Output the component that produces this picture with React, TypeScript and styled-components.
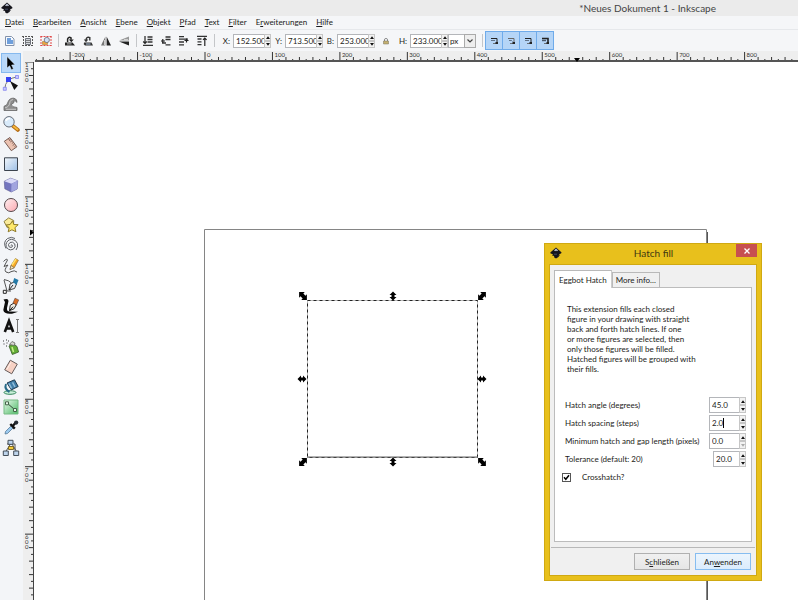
import React, { ReactNode, useEffect, useState } from "react";
import styled, { createGlobalStyle, css } from "styled-components";

const GlobalStyle = createGlobalStyle`
  *, *::before, *::after { box-sizing: border-box; }
  html, body, #root { height: 100%; margin: 0; }
  body { overflow: hidden; background: #fff; }
  body, button, input, select { font-family: Lato, "Open Sans", sans-serif; font-size: 8px; color: #1c1c20; }
  button { padding: 0; border: 0; background: none; }
  svg { display: block; }
`;

const Shell = styled.div`
  position: relative;
  display: flex;
  flex-direction: column;
  height: 100vh;
  overflow: hidden;
`;

const TitleBar = styled.header`
  display: flex;
  align-items: center;
  height: 16px;
  flex: none;
  padding: 0 82px 0 1px;
  background: #ebebeb;
`;

const WindowTitle = styled.h1`
  margin: 0 0 0 auto;
  font-size: 10px;
  line-height: 16px;
  font-weight: 400;
  color: #444;
`;

const MenuBar = styled.nav`
  display: flex;
  gap: 9px;
  height: 14px;
  flex: none;
  padding: 0 5px;
  background: #f5f6f8;
  border-bottom: 1px solid #e6e8eb;
`;

const MenuItem = styled.button`
  line-height: 13px;
  white-space: nowrap;
`;

const ToolBar = styled.div`
  display: flex;
  align-items: center;
  height: 21px;
  flex: none;
  padding-left: 1px;
  background: #f5f6f8;
`;

const IconButton = styled.button`
  display: grid;
  place-items: center;
  width: 18px;
  height: 19px;
  flex: none;
`;

const ToggleButton = styled(IconButton)`
  background: #b5d5f7;
  border: 1px solid #6fabea;
  & + & { margin-left: -1px; }
`;

const Separator = styled.span`
  width: 6px;
  height: 13px;
  flex: none;
  &::before {
    content: "";
    display: block;
    width: 1px;
    height: 100%;
    margin: 0 auto;
    background: #c4c6c9;
  }
`;

const Fields = styled.div`
  display: flex;
  align-items: center;
  padding: 0 3px 0 2px;
`;

const FieldLabel = styled.label`
  width: 14px;
  padding-right: 3px;
  text-align: right;
`;

const SpinBox = styled.span<{ $width: number; $height: number }>`
  position: relative;
  display: flex;
  width: ${(p) => p.$width}px;
  height: ${(p) => p.$height}px;
  flex: none;
`;

const SpinInput = styled.input`
  flex: 1;
  min-width: 0;
  padding: 0 0 0 2px;
  border: 1px solid #b4b6ba;
  border-right: 0;
  border-radius: 0;
  background: #fff;
  outline: none;
`;

const Steppers = styled.span`
  display: flex;
  flex-direction: column;
  width: 7px;
`;

const Stepper = styled.button`
  display: grid;
  place-items: center;
  flex: 1;
  min-height: 0;
  border: 1px solid #c6c6c6;
  background: #f2f2f2;
  color: #111;
  &:disabled { color: #aaa; }
`;

const Caret = styled.span`
  position: absolute;
  left: 14px;
  top: 3px;
  width: 1px;
  height: 10px;
  background: #000;
`;

const LockButton = styled(IconButton)`
  width: 21px;
`;

const UnitBox = styled.span`
  position: relative;
  width: 28px;
  height: 14px;
`;

const UnitSelect = styled.select`
  width: 100%;
  height: 100%;
  padding: 0 0 0 1px;
  appearance: none;
  border: 1px solid #b4b6ba;
  border-radius: 0;
  background: #fff;
`;

const UnitArrow = styled.span`
  position: absolute;
  right: 0;
  top: 0;
  display: grid;
  place-items: center;
  width: 12px;
  height: 14px;
  border: 1px solid #aaa;
  background: #eee;
  pointer-events: none;
`;

const Workspace = styled.main`
  display: grid;
  grid-template-columns: 23px 11px 1fr;
  grid-template-rows: 11px 1fr;
  flex: 1;
  min-height: 0;
`;

const ToolColumn = styled.div`
  grid-row: 1 / 3;
  min-height: 0;
  background: #f3f5f8;
`;

const ToolBox = styled.aside`
  display: flex;
  flex-direction: column;
  justify-content: space-between;
  align-items: flex-start;
  height: 100%;
  max-height: 407px;
  padding: 2px 0 0 1px;
`;

const ToolButton = styled.button<{ $active?: boolean }>`
  display: grid;
  place-items: center;
  width: 20px;
  height: 20px;
  flex: none;
  border: 1px solid transparent;
  ${(p) => p.$active && css`
    background: #b9d8f9;
    border-color: #86b9ee;
  `}
`;

const RulerTop = styled.div`
  grid-column: 2 / 4;
  min-width: 0;
  overflow: hidden;
  background: #eeeeee;
`;

const RulerLeft = styled.div`
  min-height: 0;
  overflow: hidden;
  background: #eeeeee;
`;

const Canvas = styled.section`
  min-width: 0;
  min-height: 0;
  overflow: hidden;
  background: #fff;
`;

const Drawing = styled.svg`
  width: 100%;
  height: 100%;
`;

const TickText = styled.text`
  font-family: Lato, sans-serif;
  font-size: 6px;
  fill: #333;
`;

const Dialog = styled.section`
  position: absolute;
  left: 544px;
  top: 243px;
  display: flex;
  flex-direction: column;
  width: 218px;
  height: 338px;
  padding: 0 4px 4px;
  background: #e8c01c;
  border: 1px solid #d0a912;
`;

const DialogTitleBar = styled.header`
  display: grid;
  grid-template-columns: 21px 1fr 21px;
  height: 20px;
  flex: none;
  padding-left: 1px;
`;

const DialogIcon = styled.span`
  padding: 3px 0 0;
`;

const DialogTitle = styled.h2`
  margin: 0;
  text-align: center;
  font-size: 10px;
  line-height: 19px;
  font-weight: 400;
  color: #3f3812;
`;

const CloseButton = styled.button`
  display: grid;
  place-items: center;
  height: 13px;
  background: #c75050;
`;

const DialogBody = styled.div`
  display: flex;
  flex-direction: column;
  flex: 1;
  border: 1px solid #d0a912;
  background: #f0f0f0;
`;

const Tabs = styled.div`
  display: flex;
  align-items: flex-end;
  padding: 5px 4px 0;
`;

const Tab = styled.button<{ $active?: boolean }>`
  height: 15px;
  padding: 0 3px;
  border: 1px solid #b9b9b9;
  border-bottom: 0;
  background: #f0f0f0;
  white-space: nowrap;
  ${(p) => p.$active && css`
    position: relative;
    height: 18px;
    margin-bottom: -1px;
    padding: 0 4px;
    border-right-color: #ccc;
    background: #fff;
  `}
`;

const Panel = styled.div`
  flex: 1;
  margin: 0 4px 5px;
  padding: 16px 5px 0 7px;
  border: 1px solid #bcbcbc;
  background: #fff;
`;

const Description = styled.p`
  margin: 0 0 22px 5px;
  line-height: 10px;
`;

const FormRow = styled.div`
  display: flex;
  align-items: center;
  justify-content: space-between;
  height: 18px;
  padding-left: 3px;
  white-space: nowrap;
`;

const CheckRow = styled.label`
  display: flex;
  align-items: center;
  gap: 11px;
  height: 18px;
`;

const CheckBox = styled.input`
  appearance: none;
  width: 9px;
  height: 9px;
  margin: 0;
  border: 1px solid #555;
  background: #fff;
  &:checked {
    background: #fff url("data:image/svg+xml,%3Csvg xmlns='http://www.w3.org/2000/svg' viewBox='0 0 7 7'%3E%3Cpath d='M1 3.3 2.8 5.3 6 1.3' fill='none' stroke='black' stroke-width='1.5'/%3E%3C/svg%3E") center / 7px no-repeat;
  }
`;

const DialogActions = styled.footer`
  display: flex;
  justify-content: flex-end;
  gap: 5px;
  margin: 0 1px;
  padding: 5px 4px 5px;
  border-top: 1px solid #b8b8b8;
`;

const ActionButton = styled.button<{ $primary?: boolean }>`
  width: 56px;
  height: 17px;
  border: 1px solid ${(p) => (p.$primary ? "#86bdf0" : "#b0b0b0")};
  background: ${(p) => (p.$primary ? "linear-gradient(#ecf5fd, #dbecfc)" : "linear-gradient(#f0f0f0, #e6e6e6)")};
`;

const Logo = ({ size }: { size: number }) => (
  <svg width={size} height={size} viewBox="0 0 12 12" aria-hidden="true">
    <path d="M6 .6 11.4 5.2Q11.9 6.7 9.6 7L9 7.6 10.2 8.3 8.6 8.8 8.9 9.7 6 11.6 4 10.2 4.2 9 2 8.5 3 7.2.6 6.6.3 5.4Z" fill="#15151c" />
    <path d="M6 1.6 8 3.5 7 4.2 6.1 3.6 5.1 4.3 4.1 3.5Z" fill="#c3cadb" />
    <path d="M4 7.2h3" stroke="#5c6c92" strokeWidth=".6" />
  </svg>
);

const Svg = ({ children, size = 12 }: { children: ReactNode; size?: number }) => (
  <svg width={size} height={size} viewBox={`0 0 ${size} ${size}`} fill="none" aria-hidden="true">
    {children}
  </svg>
);

const barsWith = (arrow: string, bars: string) => (
  <Svg>
    <path d={bars} stroke="#333" strokeWidth="1.3" />
    <path d={arrow} stroke="#222" strokeWidth="1.2" />
  </Svg>
);

const selectIcons: [string, ReactNode][] = [
  ["Alles auswählen", <Svg><path d="M1.500 1.500h6l2.500 2.500v6.500h-8.500Z" fill="#f6faff" stroke="#8391a9" /><path d="M3 3h4v2h2v4H3Z" fill="#6f9fdc" /></Svg>],
  ["In allen Ebenen auswählen", <Svg><path d="M0 1.500h11M1.500 1v10M0 10.500h11M10.500 1v10" stroke="#555" strokeDasharray="2 1" /><path d="M3.500 3.500h5v6h-5Z" fill="#d5d9de" stroke="#6f737c" /><path d="M4 5.500h4M4 7.500h4" stroke="#555" strokeWidth=".7" /></Svg>],
  ["Auswahl aufheben", <Svg><path d="M.500 1.500h11M1 1v10M.500 10.500h11M11 1v10" stroke="#e04848" strokeDasharray="2 1" /><path d="M2.500 6.500h5v3h-5Z" fill="#eda63c" stroke="#a97a35" strokeWidth=".6" /><circle cx="6.800" cy="5" r="2.600" fill="#cfe1f5" stroke="#667" strokeWidth=".8" /></Svg>],
];

const turnIcons: [string, ReactNode][] = [
  ["Gegen Uhrzeigersinn drehen", <Svg><path d="M1 7.500h7.500l2.500 3H1Z" fill="#222" /><path d="M3 8.900h4.500" stroke="#ddd" strokeWidth=".8" /><path d="M3.600 7V4q1-2.500 3.400-1.200v2" stroke="#222" strokeWidth="1.500" /><path d="M4.800 4.400h5L7.300 7.200Z" fill="#222" /></Svg>],
  ["Im Uhrzeigersinn drehen", <Svg><path d="M2 7.500h7.500l1.500 3H3Q1 9.500 2 7.500Z" fill="#333" /><path d="M4 9h4.500" stroke="#aec3dd" /><path d="M4.200 5V4q.8-2.500 3.600-1.400v3" stroke="#333" strokeWidth="1.400" /><path d="M1.800 4.600h4.600L4 7.200Z" fill="#333" /></Svg>],
  ["Horizontal umkehren", <Svg><path d="M5.400 1.500v9H1Z" fill="#777" /><path d="M6.600 1.500v9H11Z" fill="#222" /><path d="M4.500 5v5" stroke="#ccc" /></Svg>],
  ["Vertikal umkehren", <Svg><path d="M11 1.500v4H1Z" fill="#999" /><path d="M11 10.500v-4H1Z" fill="#222" /><path d="M6 4.700h4" stroke="#ddd" /></Svg>],
];

const orderIcons: [string, ReactNode][] = [
  ["Nach ganz unten", barsWith("M3 1v7M1.200 6.500 3 8.300l1.800-1.800", "M5.500 2h5M5.500 4.500h5M5.500 7h5M1 10.300h10")],
  ["Absenken", barsWith("M1 6h4M2.800 4v4", "M5.500 2h5M5.500 4.500h5M2 8h4M5.500 9.800h5")],
  ["Anheben", barsWith("M8.500 3.500v4M6.500 5.500h4", "M1 1.700h5M1 4.200h9M1 7h5M1 9.800h5")],
  ["Nach ganz oben", barsWith("M8.800 3v8M7 4.800 8.800 3l1.800 1.800", "M1 1.300h10M1.500 4h4M1.500 6.800h4M1.500 9.600h4")],
];

const Affect = ({ kind }: { kind: number }) => (
  <Svg size={8}>
    <path d="M1 1.500h6v3.500" stroke={kind === 1 ? "#666" : "#222"} strokeWidth={kind === 3 ? 1.6 : 1} />
    <path d={kind === 1 ? "M2 3.500h2.500l1 1" : "M1 3.500h4"} stroke="#4d5a6c" strokeWidth={kind === 3 ? 1.4 : 0.8} />
    <path d="M3 6.500h3" stroke="#555" strokeWidth=".8" />
    <path d="M5.500 5H8v2H5.500Z" fill="#222" />
  </Svg>
);

const T = ({ children }: { children: ReactNode }) => (
  <svg width="18" height="18" viewBox="0 0 18 18" fill="none" strokeLinejoin="round" aria-hidden="true">{children}</svg>
);

const tools: [string, ReactNode][] = [
  ["Auswahl", <T><path d="M5 2.500v11.500l2.600-2.200 1.800 3.900 2-1-1.800-3.700 3.400-.3Z" fill="#000" stroke="#dcecff" strokeWidth=".5" /></T>],
  ["Knoten", <T><path d="M2.800 15Q3 4.500 15.500 2.800" stroke="#777" /><path d="M1.300 13.300h3v3h-3ZM13.500 1.500h3v3h-3Z" fill="#c8c8ff" stroke="#7777ef" strokeWidth=".7" /><path d="M4 3h5v5H4Z" fill="#3542f2" /><path d="m8 7 8 4.500-3.700 4.500Z" fill="#111" /></T>],
  ["Modellieren", <T><path d="M2 15.500v-4.200Q5.500 10.500 6 7 7.500 2.700 12 3.200q3.400 1 3 4.200-1.600-2-3.400-1.400 1 1.800-.6 2.400-1.700.3-1.600 1.500.8 2.400 5.600 2.600v3Z" fill="#8d8d8d" stroke="#666" strokeWidth=".8" /><path d="M3 12.800q4.500-.6 5-6.100.8-2 3-2.200M4 14.300h10" stroke="#ccc" strokeWidth=".9" /></T>],
  ["Zoom", <T><path d="m11 11 5 4" stroke="#b36a13" strokeWidth="3.600" strokeLinecap="round" /><path d="m11.500 11.300 4 3.200" stroke="#f4b83d" strokeWidth="2" strokeLinecap="round" /><circle cx="7" cy="6.800" r="5.200" fill="#d9ebfb" stroke="#656b76" /><path d="M4 6q1-3 4-2.500" stroke="#fff" strokeWidth="1.800" /></T>],
  ["Messen", <T><path d="m2.300 6.300 5.600-3.800 7 9.300-5.600 3.900Z" fill="#ecc3b2" stroke="#775d55" /><path d="m6.500 3.800 1.700 2.300M8.800 4 7.500 5M10 5.800 8.300 7M11.200 7.500l-1.300 1M12.500 9.200l-1.800 1.300M13.700 10.800l-1.300 1" stroke="#6c514a" strokeWidth=".8" /></T>],
  ["Rechteck", <T><path d="M2.500 2.800h13v12.700h-13Z" fill="url(#blueFill)" stroke="#3b434e" /></T>],
  ["Quader", <T><path d="m2.300 5.200 6.400-3 7 2.600-.5 8.200-6 3-6.400-3.200Z" fill="#7375bf" stroke="#55568e" strokeWidth=".6" /><path d="m2.300 5.200 6.400-3 7 2.600-6.200 3Z" fill="#dadbf8" /><path d="m9.500 7.800 6.200-3-.5 8.200-6 3Z" fill="#a1a4df" /></T>],
  ["Ellipse", <T><circle cx="9" cy="9" r="6.500" fill="url(#pinkFill)" stroke="#55484b" /></T>],
  ["Stern", <T><path d="m2 5.500 4.700-3.600 5 2.600-.2 5.600-6.200 1.600Z" fill="#faeb9a" stroke="#8e8141" /><path d="m10.500 4.800 1.300 3.700 4.400.2-3.300 3 1 4-4-1.900-3.700 2 .9-4.100-3-2.700 4-.5Z" fill="#ffe96a" stroke="#8e7a28" /></T>],
  ["Spirale", <T><path d="M9 9.500q.2-1.200 1.200-.4.9 2-1.200 2.400-2.800-.1-2.500-3 1-2.900 4-2.300 3.200 1.200 2.600 4.500-1.100 3.300-4.600 3.200Q4 13 4 8.700 4.800 3.800 9.600 3.300q4.400.2 5.900 4.200.6 4-1.500 6.500M4 12.500Q.6 6 5.500 2.500 9.500.2 13 2.500" stroke="#5e6166" /></T>],
  ["Freihand", <T><path d="M1.500 4.500q3.500-3.600 4-1.500L2 9.500 6 8Q1.500 13 4 15q3 1.800 5-.3 3.500-2 6 .4" stroke="#555" /><path d="m8 12.500 1-4 4.400-7 3 1.800-4.200 7.500Z" fill="#f7a826" stroke="#7e6027" strokeWidth=".6" /><path d="m8 12.500 1-4 3.200 2.200Z" fill="#f7e4b5" stroke="#333" strokeWidth=".4" /><path d="m10 8 4-6" stroke="#ffe36d" strokeWidth="1.400" /></T>],
  ["Bézierkurve", <T><path d="M2 2.500q5 .8 7.500 3.500M2 3l3 11h4" stroke="#555" /><path d="M1.300 13.300h3v3h-3Z" fill="#fff" stroke="#222" /><path d="m7 13 1-6 4-2 2.500 2-2 4.500Z" fill="#e9edf2" stroke="#444" /><path d="m11 5 1.200-4 4.300 2-2 5Z" fill="#247aa8" /><path d="m7 13 4-5" stroke="#222" /></T>],
  ["Kalligrafie", <T><path d="M1.500 2.500q5-1.500 5 1.500L5 11q-.5 3.500 3 3.500l8 .3-6 1.900Q2 17.500 1.300 13L3 5Z" fill="#0b0b0b" /><path d="m7.500 13.700.7-5.300L12 6l2.300 1.700-2.200 4Z" fill="#f2eee5" stroke="#222" /><path d="m11 6 2-4.800 3.700 1.700-2.200 5Z" fill="#d96d24" stroke="#433" strokeWidth=".5" /><path d="m7.500 13.700 3.500-4" stroke="#111" /></T>],
  ["Text", <T><path d="M2.800 15 7 4l4.200 11M4.200 11.500h5.600" stroke="#111" strokeWidth="2.600" strokeLinejoin="miter" /><path d="M14 2.500h3m-1.500 0v13m-1.500 0h3" stroke="#777" /></T>],
  ["Sprühen", <T><path d="m7 8 4-2.500 4 3 1.600 5.500-6.300 2.500Z" fill="#62ad35" stroke="#395a2b" strokeWidth=".8" /><path d="m7.500 6.500 2.500-3 3 1.500-.6 2.500Z" fill="#d8d9d2" stroke="#555" strokeWidth=".7" /><path d="M1 3h1m2-1h1M1.500 6h1m2-1h1M4 8h1m1-5h1" stroke="#333" strokeWidth="1.200" /><path d="m10 9 1.500 5" stroke="#c8ee8a" strokeWidth="1.500" /></T>],
  ["Radieren", <T><path d="m8.300 2.200 7 4-5.600 9.600-7-4Z" fill="#f6d1c4" stroke="#665b5a" /><path d="m4.800 11.500 4.200-7.200" stroke="#fff0e9" /></T>],
  ["Füllen", <T><ellipse cx="8" cy="14.500" rx="6" ry="1.800" fill="#c9f0da" stroke="#35865d" /><path d="M4 6q-2 5 3.500 8" stroke="#286b8a" strokeWidth="2" /><path d="m5 5 7.500-3.200 3.700 6.700-6.800 3.400Z" fill="#3f7ca7" stroke="#233d52" /><path d="m7 5.500 2.500 4.800m1-6L13 9" stroke="#90bddb" strokeWidth="1.500" /></T>],
  ["Farbverlauf", <T><path d="M2 2h14v14H2Z" fill="url(#greenFill)" stroke="#75ba83" /><path d="m5.300 5.300 7.500 6.400" stroke="#354b39" /><path d="M3.500 3.800h3v3h-3ZM11.500 10.500h3v3h-3Z" fill="#e8f8eb" stroke="#426448" /></T>],
  ["Pipette", <T><path d="m3 15 .5-2.500 6-6 2 2-6 6Z" fill="#9ac9ee" stroke="#4a6e8d" strokeWidth=".7" /><path d="m8.300 5 4.500 4.600M10.500 7.300l3.500-4" stroke="#111" strokeWidth="2.400" /><circle cx="14.200" cy="3.600" r="2.100" fill="#252b33" /></T>],
  ["Objektverbinder", <T><path d="M8.500 5 3.800 12.500M10 5l4.500 7.500M5 5h8v6" stroke="#555" /><path d="M6 1.300h5v4H6ZM1.300 12h5v4.500h-5ZM11.700 12h5v4.500h-5Z" fill="#bdd4ec" stroke="#444e59" /><path d="M6.500 7.500h5v3h-5Z" fill="#f4cb39" stroke="#7c6929" /></T>],
];

const Spinner = ({ id, value, width, height, caret, minimum }: {
  id: string; value: string; width: number; height: number; caret?: boolean; minimum?: boolean;
}) => (
  <SpinBox $width={width} $height={height}>
    <SpinInput id={id} type="text" inputMode="decimal" defaultValue={value} />
    {caret && <Caret />}
    <Steppers>
      <Stepper type="button" tabIndex={-1} aria-label="Erhöhen"><svg width="4" height="3" viewBox="0 0 4 3"><path d="M0 3 2 .3 4 3Z" fill="currentColor" /></svg></Stepper>
      <Stepper type="button" tabIndex={-1} aria-label="Verringern" disabled={minimum}><svg width="4" height="3" viewBox="0 0 4 3"><path d="M0 0 2 2.700 4 0Z" fill="currentColor" /></svg></Stepper>
    </Steppers>
  </SpinBox>
);

const IconGroup = ({ items }: { items: [string, ReactNode][] }) => (
  <>
    {items.map(([name, icon]) => <IconButton key={name} type="button" aria-label={name}>{icon}</IconButton>)}
  </>
);

const UNIT = 67.45;
const range = (from: number, to: number) => Array.from({ length: Math.max(0, to - from) }, (_, i) => from + i);
const minorLength = (i: number) => (i % 2 === 0 ? 4 : 2);

const useWindowSize = () => {
  const [size, setSize] = useState({ width: window.innerWidth, height: window.innerHeight });
  useEffect(() => {
    const update = () => setSize({ width: window.innerWidth, height: window.innerHeight });
    window.addEventListener("resize", update);
    return () => window.removeEventListener("resize", update);
  }, []);
  return size;
};

const HorizontalRuler = ({ width }: { width: number }) => {
  const units = Math.ceil((width - 220) / UNIT);
  return (
    <Drawing aria-hidden="true">
      {range(-25, units * 10 + 10).map((i) => (
        <path key={i} d={`M${182 + (i * UNIT) / 10} 10v-${i % 10 === 0 ? 9 : minorLength(i)}`} stroke="#333" />
      ))}
      {range(-2, units).map((i) => <TickText key={i} x={184 + i * UNIT} y={6}>{i * 100}</TickText>)}
      <path d="M12 10h4000" stroke="#555" strokeWidth="2" />
      <path d="M551 7h6l-3 4Z" fill="#000" />
    </Drawing>
  );
};

const VerticalRuler = ({ height }: { height: number }) => {
  const units = Math.ceil((height - 90) / UNIT);
  return (
    <Drawing aria-hidden="true">
      {range(0, units * 10 + 10).map((i) => (
        <path key={i} d={`M10 ${(i * UNIT) / 10}h-${i % 10 === 0 ? 8 : minorLength(i)}`} stroke="#333" />
      ))}
      {range(0, units).map((i) => (
        <TickText key={i} y={i * UNIT}>
          {String(1300 - i * 100).split("").map((digit, n) => (
            <tspan key={n} x={2} dy={5}>{digit}</tspan>
          ))}
        </TickText>
      ))}
      <path d="M10.500 0v4000" stroke="#444" />
      <path d="M7 167.500v6l4-3Z" fill="#000" />
    </Drawing>
  );
};

const Arrow = ({ x, y, angle, big }: { x: number; y: number; angle: number; big?: boolean }) => (
  <path
    transform={`translate(${x} ${y}) rotate(${angle})`}
    d={big ? "M-5.500 0-1.500-4v2h3v-2l4 4-4 4v-2h-3v2Z" : "M-4.500 0-1-3.500v2h2v-2L4.500 0 1 3.500v-2h-2v2Z"}
    fill="#000"
  />
);

const Artboard = () => (
  <Drawing role="img" aria-label="Zeichenfläche">
    <path d="M673 170v2000" stroke="#555" strokeWidth="2" />
    <path d="M170.500 2170V167.500h502v2002" fill="none" stroke="#858585" />
    <rect x="273.500" y="238.500" width="170" height="157" fill="none" stroke="#bbb" />
    <rect x="273.500" y="238.500" width="170" height="157" fill="none" stroke="#222" strokeDasharray="3 3" />
    <path d="M273 395h171" stroke="#666" />
    <Arrow x={269} y={234} angle={45} big />
    <Arrow x={448} y={234} angle={-45} big />
    <Arrow x={269} y={400} angle={-45} big />
    <Arrow x={448} y={400} angle={45} big />
    <Arrow x={359} y={234} angle={90} />
    <Arrow x={359} y={400} angle={90} />
    <Arrow x={268} y={317} angle={0} />
    <Arrow x={448} y={317} angle={0} />
  </Drawing>
);

const Gradients = () => (
  <defs>
    <linearGradient id="blueFill" x2="1" y2="1"><stop stopColor="#f2f7fc" /><stop offset="1" stopColor="#9dbfe6" /></linearGradient>
    <linearGradient id="pinkFill" x2="1" y2="1"><stop stopColor="#fff0f1" /><stop offset="1" stopColor="#fba9b1" /></linearGradient>
    <linearGradient id="greenFill" x2="1" y2="1"><stop stopColor="#e9f9ec" /><stop offset="1" stopColor="#4cba65" /></linearGradient>
  </defs>
);

const menus = ["Datei", "Bearbeiten", "Ansicht", "Ebene", "Objekt", "Pfad", "Text", "Filter", "Erweiterungen", "Hilfe"];

const rows = [
  { id: "angle", label: "Hatch angle (degrees)", value: "45.0", width: 37 },
  { id: "spacing", label: "Hatch spacing (steps)", value: "2.0", width: 37, caret: true },
  { id: "minimum", label: "Minimum hatch and gap length (pixels)", value: "0.0", width: 37, minimum: true },
  { id: "tolerance", label: "Tolerance (default: 20)", value: "20.0", width: 33 },
];

const HatchDialog = () => (
  <Dialog role="dialog" aria-labelledby="dialog-title">
    <DialogTitleBar>
      <DialogIcon><Logo size={12} /></DialogIcon>
      <DialogTitle id="dialog-title">Hatch fill</DialogTitle>
      <CloseButton type="button" aria-label="Fenster schließen">
        <svg width="6" height="6" viewBox="0 0 6 6"><path d="m.5.5 5 5m0-5-5 5" stroke="#fff" strokeWidth="1.300" /></svg>
      </CloseButton>
    </DialogTitleBar>
    <DialogBody>
      <Tabs role="tablist">
        <Tab type="button" role="tab" aria-selected="true" $active>Eggbot Hatch</Tab>
        <Tab type="button" role="tab" aria-selected="false">More info...</Tab>
      </Tabs>
      <Panel role="tabpanel">
        <Description>
          This extension fills each closed<br />figure in your drawing with straight<br />back and forth hatch lines. If one<br />
          or more figures are selected, then<br />only those figures will be filled.<br />Hatched figures will be grouped with<br />their fills.
        </Description>
        {rows.map(({ label, ...field }) => (
          <FormRow key={field.id}>
            <label htmlFor={field.id}>{label}</label>
            <Spinner {...field} height={16} />
          </FormRow>
        ))}
        <CheckRow><CheckBox type="checkbox" defaultChecked />Crosshatch?</CheckRow>
      </Panel>
      <DialogActions>
        <ActionButton type="button">S<u>c</u>hließen</ActionButton>
        <ActionButton type="button" $primary>An<u>w</u>enden</ActionButton>
      </DialogActions>
    </DialogBody>
  </Dialog>
);

const Field = ({ name, value }: { name: string; value: string }) => (
  <>
    <FieldLabel htmlFor={`field-${name}`}>{name}:</FieldLabel>
    <Spinner id={`field-${name}`} value={value} width={38} height={14} />
  </>
);

export default function App() {
  const { width, height } = useWindowSize();
  return (
    <Shell>
      <GlobalStyle />
      <svg width="0" height="0" aria-hidden="true"><Gradients /></svg>
      <TitleBar>
        <Logo size={12} />
        <WindowTitle>*Neues Dokument 1 - Inkscape</WindowTitle>
      </TitleBar>
      <MenuBar>
        {menus.map((name) => {
          const at = name === "Erweiterungen" ? 1 : 0;
          return <MenuItem key={name} type="button">{name.slice(0, at)}<u>{name[at]}</u>{name.slice(at + 1)}</MenuItem>;
        })}
      </MenuBar>
      <ToolBar>
        <IconGroup items={selectIcons} />
        <Separator />
        <IconGroup items={turnIcons} />
        <Separator />
        <IconGroup items={orderIcons} />
        <Separator />
        <Fields>
          <Field name="X" value="152.500" />
          <Field name="Y" value="713.500" />
          <Field name="B" value="253.000" />
          <LockButton type="button" aria-label="Seitenverhältnis sperren">
            <Svg size={8}><path d="M2.500 4V2.200Q4 .5 5.500 2.200V4" stroke="#888" /><path d="M1.500 4h5v3h-5Z" fill="#c4b070" stroke="#77715f" strokeWidth=".5" /></Svg>
          </LockButton>
          <Field name="H" value="233.000" />
          <UnitBox>
            <UnitSelect aria-label="Einheit" defaultValue="px"><option>px</option><option>mm</option></UnitSelect>
            <UnitArrow><svg width="6" height="4" viewBox="0 0 6 4"><path d="m.5.5 2.500 2.500L5.500.5" fill="none" stroke="#444" strokeWidth="1.200" /></svg></UnitArrow>
          </UnitBox>
        </Fields>
        <Separator />
        {["Strichbreite", "Ecken", "Farbverläufe", "Muster"].map((name, i) => (
          <ToggleButton key={name} type="button" aria-label={`${name} skalieren`} aria-pressed="true"><Affect kind={i} /></ToggleButton>
        ))}
      </ToolBar>
      <Workspace>
        <ToolColumn>
          <ToolBox>
            {tools.map(([name, icon], i) => <ToolButton key={name} type="button" aria-label={name} $active={i === 0}>{icon}</ToolButton>)}
          </ToolBox>
        </ToolColumn>
        <RulerTop><HorizontalRuler width={width} /></RulerTop>
        <RulerLeft><VerticalRuler height={height} /></RulerLeft>
        <Canvas><Artboard /></Canvas>
      </Workspace>
      <HatchDialog />
    </Shell>
  );
}
